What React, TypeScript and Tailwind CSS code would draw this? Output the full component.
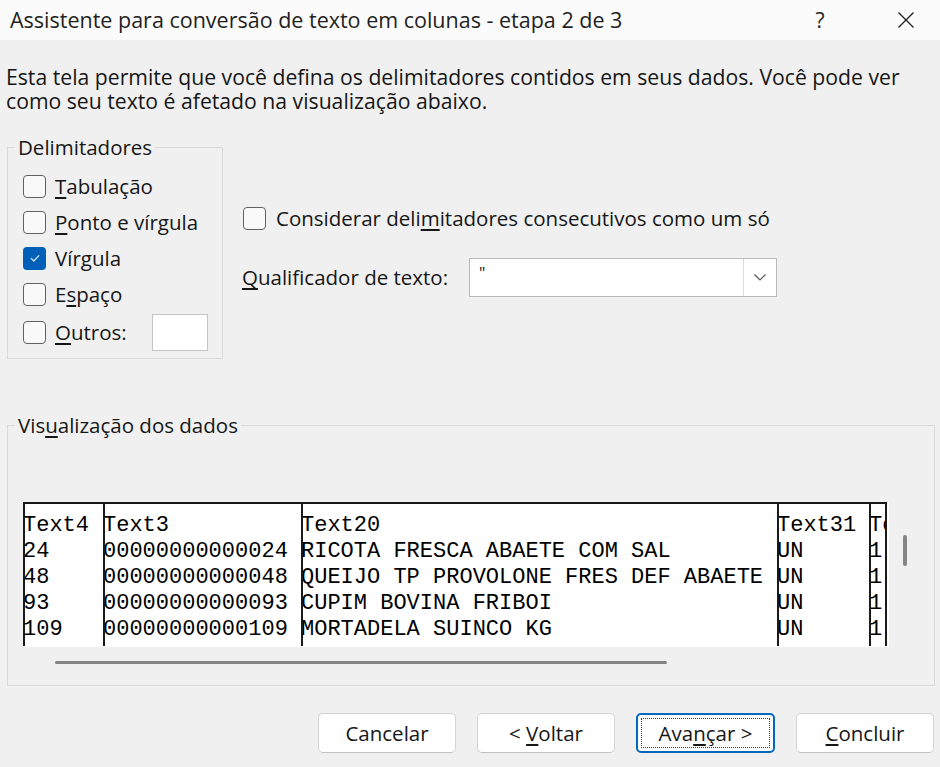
import React from "react";

function U({ children }: { children: React.ReactNode }) {
  return <span className="underline underline-offset-[3px] decoration-[1.5px]">{children}</span>;
}

function Box({ checked }: { checked?: boolean }) {
  if (checked) {
    return (
      <span className="w-[23px] h-[23px] shrink-0 rounded-[4px] bg-[#005fb8] flex items-center justify-center">
        <svg width="14" height="14" viewBox="0 0 14 14">
          <path d="M3.2 7.4l2.6 2.6L10.9 4.6" stroke="#dfe9f7" strokeWidth="1.2" fill="none" strokeLinecap="round" strokeLinejoin="round" />
        </svg>
      </span>
    );
  }
  return <span className="w-[23px] h-[23px] shrink-0 rounded-[4px] border-[1.5px] border-[#616161] bg-[#f9f9f9]" />;
}

function CheckRow({ checked, children }: { checked?: boolean; children: React.ReactNode }) {
  return (
    <div className="h-[36px] flex items-center gap-[9px]">
      <Box checked={checked} />
      <span>{children}</span>
    </div>
  );
}

const cols = [
  { cls: "w-[80px] border-l-2", cells: ["Text4", "24", "48", "93", "109"] },
  { cls: "w-[198px] border-l-2", cells: ["Text3", "00000000000024", "00000000000048", "00000000000093", "00000000000109"] },
  {
    cls: "w-[476px] border-l-2",
    cells: ["Text20", "RICOTA FRESCA ABAETE COM SAL", "QUEIJO TP PROVOLONE FRES DEF ABAETE", "CUPIM BOVINA FRIBOI", "MORTADELA SUINCO KG"],
  },
  { cls: "w-[92px] border-l-2", cells: ["Text31", "UN", "UN", "UN", "UN"] },
  { cls: "w-[18px] border-l-2 border-r-2", cells: ["Te", "1", "1", "1", "1"] },
];

function Btn({ children, focused }: { children: React.ReactNode; focused?: boolean }) {
  if (focused) {
    return (
      <div className="relative w-[139px] h-[40px] rounded-[5px] border-2 border-[#0067c0] bg-white flex items-center justify-center">
        <span className="absolute inset-[3px] border border-dotted border-[#444]" />
        <span className="whitespace-pre">{children}</span>
      </div>
    );
  }
  return (
    <div className="w-[138px] h-[40px] rounded-[5px] border border-[#d3d3d3] border-b-[#c2c2c2] bg-white flex items-center justify-center">
      <span className="whitespace-pre">{children}</span>
    </div>
  );
}

export default function App() {
  return (
    <div className="w-[940px] h-[767px] overflow-hidden bg-[#f0f0f0] text-[#161616] font-['Open_Sans',sans-serif] text-[20.5px] leading-[24px] flex flex-col">
      {/* title bar */}
      <div className="h-[40px] bg-[#fbfbfb] flex items-center shrink-0">
        <div className="pl-[10px] text-[21.5px] text-[#1f1f1f] whitespace-nowrap">Assistente para conversão de texto em colunas - etapa 2 de 3</div>
        <div className="ml-auto flex items-center pr-[12px]">
          <div className="w-[40px] text-center text-[21px] text-[#222]">?</div>
          <div className="w-[44px] ml-[44px] flex items-center justify-center">
            <svg width="18" height="18" viewBox="0 0 18 18">
              <path d="M1.5 1.5L16.5 16.5M16.5 1.5L1.5 16.5" stroke="#1f1f1f" strokeWidth="1.3" />
            </svg>
          </div>
        </div>
      </div>

      {/* description */}
      <div className="mt-[25px] pl-[6px] whitespace-nowrap text-[21.2px]">
        <div className="h-[24px]">Esta tela permite que você defina os delimitadores contidos em seus dados. Você pode ver</div>
        <div className="h-[24px]">como seu texto é afetado na visualização abaixo.</div>
      </div>

      {/* delimiters row */}
      <div className="mt-[22px] ml-[7px] flex">
        <fieldset className="w-[216px] border border-[#d9d9d9] pl-[15px] pb-[6px] pt-[9px]">
          <legend className="-ml-[8px] px-[3px]">Delimitadores</legend>
          <CheckRow>
            <U>T</U>abulação
          </CheckRow>
          <CheckRow>
            <U>P</U>onto e vírgula
          </CheckRow>
          <CheckRow checked>
            Vír<U>g</U>ula
          </CheckRow>
          <CheckRow>
            E<U>s</U>paço
          </CheckRow>
          <div className="h-[40px] flex items-center">
            <Box />
            <span className="ml-[9px] w-[97px]">
              <U>O</U>utros:
            </span>
            <span className="w-[56px] h-[37px] bg-white border border-[#c4c4c4]" />
          </div>
        </fieldset>

        <div className="ml-[20px] pt-[65px] flex flex-col">
          <div className="h-[36px] flex items-center gap-[10px]">
            <Box />
            <span className="whitespace-nowrap">
              Considerar deli<U>m</U>itadores consecutivos como um só
            </span>
          </div>
          <div className="mt-[21px] h-[40px] flex items-center -ml-px">
            <span className="w-[227px] whitespace-nowrap">
              <U>Q</U>ualificador de texto:
            </span>
            <div className="w-[308px] h-[39px] bg-white border border-[#b9b9b9] flex">
              <div className="flex-1 pl-[9px] pt-[2px] text-[16px]">"</div>
              <div className="w-[33px] border-l border-[#dadada] flex items-center justify-center">
                <svg width="14" height="10" viewBox="0 0 14 10">
                  <path d="M1.5 2.5L7 8L12.5 2.5" stroke="#555" strokeWidth="1.2" fill="none" />
                </svg>
              </div>
            </div>
          </div>
        </div>
      </div>

      {/* preview */}
      <fieldset className="mt-[54px] ml-[7px] w-[928px] border border-[#d9d9d9] pl-[15px] pb-[21px]">
        <legend className="-ml-[8px] px-[3px]">
          Vis<U>u</U>alização dos dados
        </legend>
        <div className="mt-[65px] flex">
          <div className="w-[866px] h-[145px] bg-white overflow-hidden">
            <div className="flex w-[864px] h-[144px] border-t-2 border-[#1a1a1a] font-['Liberation_Mono',monospace] text-[22px] text-black">
              {cols.map((c, i) => (
                <div key={i} className={`${c.cls} shrink-0 border-[#1a1a1a] overflow-hidden pt-[9px]`}>
                  {c.cells.map((t, j) => (
                    <div key={j} className="leading-[26px] whitespace-pre -ml-[2px]">
                      {t}
                    </div>
                  ))}
                </div>
              ))}
            </div>
          </div>
          <div className="ml-[14px] mt-[33px] w-[4px] h-[31px] rounded-[2px] bg-[#858585]" />
        </div>
        <div className="mt-[14px] ml-[32px] w-[612px] h-[3px] rounded-[2px] bg-[#858585]" />
      </fieldset>

      {/* buttons */}
      <div className="mt-[27px] flex justify-end gap-[21px] pr-[6px]">
        <Btn>Cancelar</Btn>
        <Btn>
          &lt; <U>V</U>oltar
        </Btn>
        <Btn focused>
          Ava<U>n</U>çar &gt;
        </Btn>
        <Btn>
          <U>C</U>oncluir
        </Btn>
      </div>
    </div>
  );
}
